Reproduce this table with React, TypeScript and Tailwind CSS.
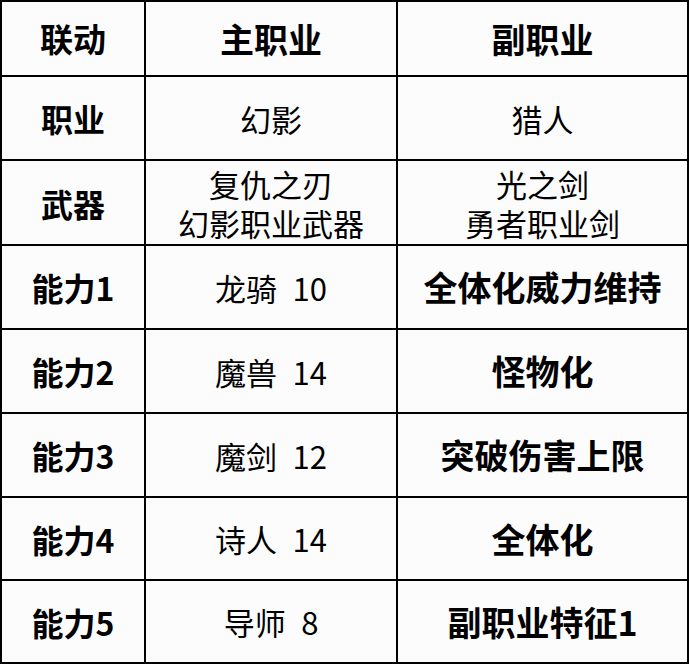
const rows: { label: string; main: string[]; sub: string[]; subBold: boolean; h: string }[] = [
  { label: '职业', main: ['幻影'], sub: ['猎人'], subBold: false, h: 'h-[82px]' },
  { label: '武器', main: ['复仇之刃', '幻影职业武器'], sub: ['光之剑', '勇者职业剑'], subBold: false, h: 'h-[83px]' },
  { label: '能力1', main: ['龙骑\u200210'], sub: ['全体化威力维持'], subBold: true, h: 'h-[82px]' },
  { label: '能力2', main: ['魔兽\u200214'], sub: ['怪物化'], subBold: true, h: 'h-[82px]' },
  { label: '能力3', main: ['魔剑\u200212'], sub: ['突破伤害上限'], subBold: true, h: 'h-[82px]' },
  { label: '能力4', main: ['诗人\u200214'], sub: ['全体化'], subBold: true, h: 'h-[81px]' },
  { label: '能力5', main: ['导师\u20028'], sub: ['副职业特征1'], subBold: true, h: 'h-[81px]' },
];

const font = "font-['Noto_Sans_CJK_SC','Noto_Sans',sans-serif]";

const Cell = ({ lines, bold }: { lines: string[]; bold: boolean }) => (
  <div className="bg-[#fdfcfd] flex items-center justify-center">
    <div
      className={
        bold
          ? 'text-[34px] font-bold leading-[38px] text-black text-center'
          : 'text-[31px] font-normal leading-[39px] text-black text-center whitespace-pre'
      }
    >
      {lines.map((l, i) => (
        <span key={l}>
          {i > 0 && <br />}
          {l}
        </span>
      ))}
    </div>
  </div>
);

export default function App() {
  return (
    <div className={`w-[690px] h-[666px] bg-white ${font}`}>
      <div className="grid grid-cols-[142px_250px_289px] gap-[2px] p-[2px] bg-black w-[689px]">
        {/* header */}
        <div className="h-[73px] bg-[#fdfcfd] flex items-center justify-center text-[33px] font-bold text-black">
          联动
        </div>
        <div className="bg-[#fdfcfd] flex items-center justify-center text-[34px] font-bold text-black">
          主职业
        </div>
        <div className="bg-[#fdfcfd] flex items-center justify-center text-[34px] font-bold text-black">
          副职业
        </div>

        {rows.map((r) => (
          <div key={r.label} className="contents">
            <div className={`${r.h} bg-[#fdfcfd] flex items-center justify-center text-[32px] font-bold text-black`}>
              {r.label}
            </div>
            <Cell lines={r.main} bold={false} />
            <Cell lines={r.sub} bold={r.subBold} />
          </div>
        ))}
      </div>
    </div>
  );
}
